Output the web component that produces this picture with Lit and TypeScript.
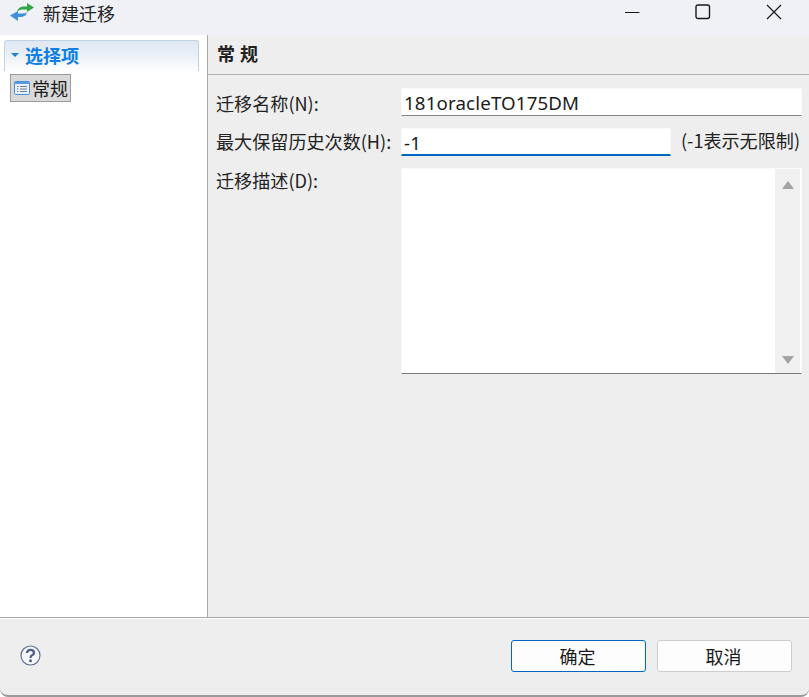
import { LitElement, html, css } from "lit";
import { customElement } from "lit/decorators.js";

@customElement("app-root")
export class AppRoot extends LitElement {
  static styles = css`
    :host { display: block; width: 809px; height: 697px; background: #fff; overflow: hidden;
      font-family: "Noto Sans CJK SC", "Noto Sans", sans-serif; font-size: 18px; color: #1a1a1a; }
    .window { box-sizing: border-box; height: 697px; display: flex; flex-direction: column; background: #eeeeee;
      border-bottom: 2px solid #9a9a9a; border-radius: 0 0 8px 8px; overflow: hidden; }
    .titlebar { height: 35px; flex: none; background: #eff1f7; display: flex; align-items: center; }
    .app-icon { margin-left: 9px; width: 26px; height: 22px; flex: none; margin-top: -7px; }
    .title { margin-left: 8px; font-size: 18px; line-height: 24px; margin-top: -10px; color: #222; }
    .controls { margin-left: auto; display: flex; height: 100%; }
    .ctl { width: 71px; display: flex; align-items: center; justify-content: center; }
    .ctl svg { display: block; margin-top: -11px; }
    .main { flex: 1; display: flex; min-height: 0; }
    .side { width: 208px; flex: none; box-sizing: border-box; background: #fff; border-right: 1px solid #a9a9a9; padding: 5px 8px 0 4px; }
    .section { height: 31px; box-sizing: border-box; border: 1px solid #c0d3e4; border-bottom: none; border-radius: 3px 3px 0 0;
      background: linear-gradient(#dfe8f2, #e9eff6 45%, #ffffff); display: flex; align-items: center; padding: 0 0 2px 6px; gap: 6px; }
    .tri { width: 0; height: 0; border-left: 4px solid transparent; border-right: 4px solid transparent; border-top: 4px solid #1a7fd6; }
    .section span { font-weight: 700; font-size: 18px; color: #0f7fe0; line-height: 22px; }
    .item { display: inline-flex; align-items: center; box-sizing: border-box; height: 28px; margin: 3px 0 0 6px; padding: 0 2px 0 3px;
      background: #d9d9d9; border: 1px solid #9b9b9b; gap: 2px; font-size: 18px; color: #1a1a1a; }
    .item svg { flex: none; }
    .content { flex: 1; min-width: 0; display: flex; flex-direction: column; }
    .head { height: 40px; flex: none; box-sizing: border-box; border-bottom: 1px solid #b0b0b0; padding: 0 0 4px 9px; display: flex; align-items: center;
      font-weight: 700; font-size: 18px; letter-spacing: 5px; color: #222; }
    .form { padding: 13px 7px 0 8px; display: grid; grid-template-columns: 185px 270px 1fr; row-gap: 12px; align-items: start; }
    .lbl { font-size: 18.1px; line-height: 24px; padding-top: 3px; color: #222; white-space: nowrap; }
    .lbl.mid { padding-top: 1px; }
    .lbl.top { padding-top: 0; }
    .input { height: 28px; box-sizing: border-box; background: #fff; border: 1px solid #fafafa; border-bottom: 1px solid #868686; border-radius: 2px 2px 0 0;
      font-size: 18.7px; line-height: 28px; padding-left: 2px; font-family: "Noto Sans", sans-serif; color: #1c1c1c; letter-spacing: 0.15px; }
    .wide { grid-column: 2 / 4; }
    .focus { border-bottom: 2px solid #0067c0; }
    .hint { font-size: 18.1px; line-height: 24px; padding: 0 0 0 10px; white-space: nowrap; color: #222; }
    .area { grid-column: 2 / 4; height: 206px; box-sizing: border-box; background: #fff; border: 1px solid #fafafa; border-bottom: 1px solid #7a7a7a; display: flex; justify-content: flex-end; }
    .sb { width: 25px; margin-right: 1px; background: #f0f0f0; display: flex; flex-direction: column; justify-content: space-between; align-items: center; padding: 12px 0 9px; box-sizing: border-box; }
    .up { width: 0; height: 0; border-left: 6px solid transparent; border-right: 6px solid transparent; border-bottom: 8px solid #a3a3a3; }
    .down { width: 0; height: 0; border-left: 6px solid transparent; border-right: 6px solid transparent; border-top: 8px solid #a3a3a3; }
    .footer { flex: none; height: 78px; box-sizing: border-box; border-top: 1px solid #a9a9a9; box-shadow: inset 0 1px 0 #fff; display: flex; align-items: center; padding: 0 17px 2px 20px; }
    .help { width: 21px; height: 21px; flex: none; margin-top: -1px; }
    .btns { margin-left: auto; display: flex; gap: 11px; margin-top: 1px; }
    .btn { width: 135px; height: 32px; box-sizing: border-box; background: #fdfdfd; border: 1px solid #cdcdcd; border-radius: 3px; font-size: 18px; line-height: 31px; padding-right: 2px; text-align: center; color: #1a1a1a; }
    .btn.primary { border-color: #0067c0; }
  `;

  render() {
    return html`<div class="window">
      <div class="titlebar">
        <svg class="app-icon" viewBox="0 0 26 22">
          <path d="M8 9 Q9 4 14 3.500 H18 V0 L25 4.500 L18 9 V6.500 H13 Q10 6.500 8 9 Z" fill="#2fa84a"/>
          <path d="M18 9.500 Q17 13.500 12 14 H9 V18 L1 12.500 L9 8 V10.500 H13 Q16.500 10.500 18 9.500 Z" fill="#3f8fe0"/>
        </svg>
        <div class="title">新建迁移</div>
        <div class="controls">
          <div class="ctl"><svg width="16" height="16" viewBox="0 0 16 16"><path d="M1 8.500 H15.500" stroke="#1a1a1a" stroke-width="1"/></svg></div>
          <div class="ctl"><svg width="16" height="16" viewBox="0 0 16 16"><rect x="1" y="1" width="13.500" height="13.500" rx="2" fill="none" stroke="#1a1a1a" stroke-width="1.400"/></svg></div>
          <div class="ctl"><svg width="16" height="16" viewBox="0 0 16 16"><path d="M1 1 L15 15 M15 1 L1 15" stroke="#1a1a1a" stroke-width="1.200"/></svg></div>
        </div>
      </div>
      <div class="main">
        <div class="side">
          <div class="section"><i class="tri"></i><span>选择项</span></div>
          <div class="item">
            <svg width="16" height="14" viewBox="0 0 16 14">
              <rect x="0.500" y="0.500" width="15" height="13" rx="1" fill="#e8f1fb" stroke="#4d8fd6"/>
              <rect x="1" y="1" width="14" height="2" fill="#5b9be0"/>
              <path d="M3 5.500 H4.500 M6 5.500 H13 M3 8 H4.500 M6 8 H13 M3 10.500 H4.500 M6 10.500 H13" stroke="#6c7f96" stroke-width="1"/>
            </svg>
            <span>常规</span>
          </div>
        </div>
        <div class="content">
          <div class="head">常规</div>
          <div class="form">
            <div class="lbl">迁移名称(N):</div>
            <div class="input wide">181oracleTO175DM</div>
            <div class="lbl mid">最大保留历史次数(H):</div>
            <div class="input focus">-1</div>
            <div class="hint">(-1表示无限制)</div>
            <div class="lbl top">迁移描述(D):</div>
            <div class="area"><div class="sb"><i class="up"></i><i class="down"></i></div></div>
          </div>
        </div>
      </div>
      <div class="footer">
        <svg class="help" viewBox="0 0 21 21">
          <circle cx="10.500" cy="10.500" r="9.500" fill="#f6f7fa" stroke="#5f7396" stroke-width="1.200"/>
          <path d="M7 8 Q7.300 4.800 10.500 4.800 Q14 4.800 14 7.700 Q14 9.300 12 10.300 Q10.500 11 10.500 13" fill="none" stroke="#4d6288" stroke-width="2.300"/>
          <circle cx="10.500" cy="15.800" r="1.500" fill="#4d6288"/>
        </svg>
        <div class="btns">
          <div class="btn primary">确定</div>
          <div class="btn">取消</div>
        </div>
      </div>
    </div>`;
  }
}
